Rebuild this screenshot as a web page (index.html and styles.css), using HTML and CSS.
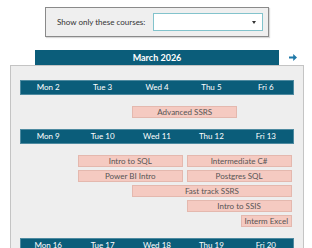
FILE: index.html
```html
<!DOCTYPE html>
<html lang="en">
<head>
    <meta charset="UTF-8">
    <meta name="viewport" content="width=device-width, initial-scale=1.0">
    <title>Course calendar</title>
    <link rel="stylesheet" href="styles.css">
</head>
<body>
    <div class="filter">
        <label for="courseFilter">Show only these courses:</label>
        <div class="select" id="courseFilter">
            <span class="caret"></span>
        </div>
    </div>

    <div class="month-nav">
        <div class="month-title">March 2026</div>
        <span class="next">
            <svg width="8" height="7" viewBox="0 0 8 7"><path d="M0 2.4h4.2V0L8 3.5 4.2 7V4.6H0z" fill="#1f78a8"/></svg>
        </span>
    </div>

    <div class="calendar">
        <div class="week">
            <div class="days">
                <div>Mon 2</div><div>Tue 3</div><div>Wed 4</div><div>Thu 5</div><div>Fri 6</div>
            </div>
            <div class="events">
                <div class="event" style="grid-column: 3 / span 2">Advanced SSRS</div>
            </div>
        </div>

        <div class="week">
            <div class="days">
                <div>Mon 9</div><div>Tue 10</div><div>Wed 11</div><div>Thu 12</div><div>Fri 13</div>
            </div>
            <div class="events">
                <div class="event" style="grid-column: 2 / span 2">Intro to SQL</div>
                <div class="event" style="grid-column: 4 / span 2">Intermediate C#</div>
                <div class="event" style="grid-column: 2 / span 2">Power BI Intro</div>
                <div class="event" style="grid-column: 4 / span 2">Postgres SQL</div>
                <div class="event" style="grid-column: 3 / span 3">Fast track SSRS</div>
                <div class="event" style="grid-column: 4 / span 2">Intro to SSIS</div>
                <div class="event" style="grid-column: 5 / span 1">Interm Excel</div>
            </div>
        </div>

        <div class="week">
            <div class="days">
                <div>Mon 16</div><div>Tue 17</div><div>Wed 18</div><div>Thu 19</div><div>Fri 20</div>
            </div>
        </div>
    </div>
</body>
</html>
```

FILE: styles.css
```css
/* Page */
body {
    font-family: Lato, "Open Sans", sans-serif;
    background-color: white;
    margin: 0;
    color: #333;
}

/* Course filter */
.filter {
    display: flex;
    align-items: center;
    justify-content: space-between;
    box-sizing: border-box;
    width: 224px;
    height: 30px;
    margin: 7px 0 0 45px;
    padding: 0 5px 0 11px;
    background-color: #efefef;
    border: 1px solid #8a8a8a;
    box-shadow: 1px 1px 1px rgba(0, 0, 0, 0.15);
}

.filter label {
    font-size: 8px;
    color: #333;
    white-space: nowrap;
}

.select {
    position: relative;
    flex-shrink: 0;
    box-sizing: border-box;
    width: 110px;
    height: 18px;
    background-color: white;
    border: 1px solid #82c3cc;
}

.caret {
    position: absolute;
    right: 6px;
    top: 7px;
    border-left: 2.5px solid transparent;
    border-right: 2.5px solid transparent;
    border-top: 3px solid #333;
}

/* Month header */
.month-nav {
    display: flex;
    align-items: center;
    margin: 13px 0 0 35px;
}

.month-title {
    width: 244px;
    height: 15px;
    line-height: 15px;
    background-color: #0b5d7a;
    color: white;
    font-size: 9px;
    font-weight: bold;
    text-align: center;
}

.next {
    display: flex;
    margin-left: 10px;
}

/* Calendar body */
.calendar {
    width: 272px;
    margin-left: 10px;
    padding: 15px 10px 4px;
    background-color: #eeeeee;
    border: 1px solid #c4c4c4;
}

.days {
    display: grid;
    grid-template-columns: repeat(5, 1fr);
    height: 13px;
    line-height: 13px;
    background-color: #0b5d7a;
    box-shadow: 0 0 0 1px #4e8aa0;
    color: white;
    font-size: 8px;
    text-align: center;
}

.events {
    display: grid;
    grid-template-columns: repeat(5, 1fr);
    row-gap: 3px;
    margin: 12px 0;
}

.event {
    box-sizing: border-box;
    height: 12px;
    line-height: 10px;
    margin: 0 1.5px 0 2.5px;
    background-color: #f5cac1;
    border: 1px solid #e4b8ae;
    color: #555;
    font-size: 8px;
    text-align: center;
    white-space: nowrap;
}
```
